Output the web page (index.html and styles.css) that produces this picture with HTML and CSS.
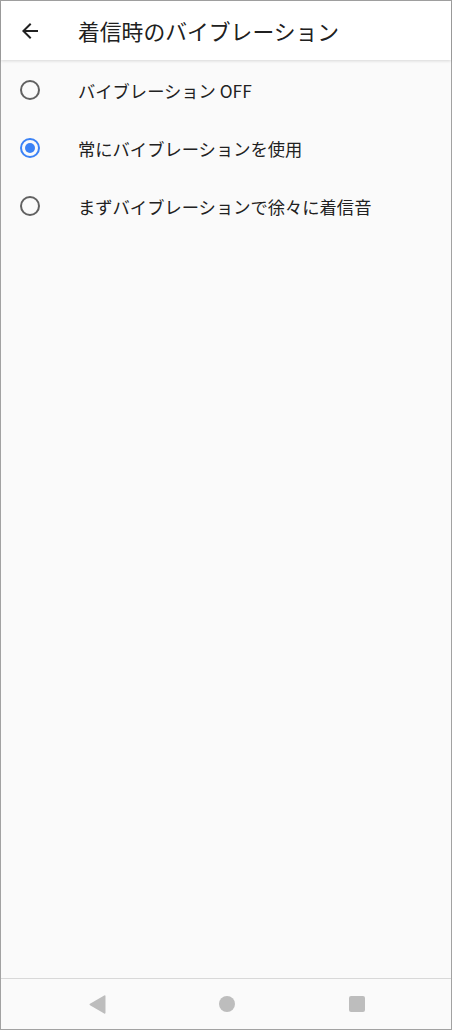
FILE: index.html
```html
<!DOCTYPE html>
<html lang="ja">
<head>
  <meta charset="UTF-8" />
  <title>着信時のバイブレーション</title>
  <meta name="viewport" content="width=device-width, initial-scale=1" />
  <link rel="stylesheet" href="styles.css">
</head>
<body>
  <div class="screen">
    <header class="appbar">
      <div class="icon-slot">
        <svg class="back" width="24" height="24" viewBox="0 0 24 24">
          <path d="M20 11H7.83l5.59-5.59L12 4l-8 8 8 8 1.41-1.41L7.83 13H20v-2z" />
        </svg>
      </div>
      <h1 class="title">着信時のバイブレーション</h1>
    </header>

    <ul class="options">
      <li class="option">
        <div class="icon-slot"><span class="radio"></span></div>
        <span class="label">バイブレーション OFF</span>
      </li>
      <li class="option">
        <div class="icon-slot"><span class="radio checked"></span></div>
        <span class="label">常にバイブレーションを使用</span>
      </li>
      <li class="option">
        <div class="icon-slot"><span class="radio"></span></div>
        <span class="label">まずバイブレーションで徐々に着信音</span>
      </li>
    </ul>

    <nav class="navbar">
      <div class="nav-slot">
        <svg width="17" height="19" viewBox="0 0 17 19">
          <path d="M15.2 0.6 Q16.5 -0.2 16.5 1.4 V17.6 Q16.5 19.2 15.2 18.4 L1 10.2 Q0 9.5 1 8.8 Z" />
        </svg>
      </div>
      <div class="nav-slot"><span class="home"></span></div>
      <div class="nav-slot"><span class="recents"></span></div>
    </nav>
  </div>
</body>
</html>
```

FILE: styles.css
```css
html, body {
  margin: 0;
  padding: 0;
}
body {
  font-family: "Noto Sans CJK JP", "Noto Sans", Roboto, sans-serif;
  color: #212121;
}
.screen {
  width: 452px;
  height: 1030px;
  box-sizing: border-box;
  border: 1px solid #a2a2a2;
  background: #fafafa;
  display: flex;
  flex-direction: column;
}
.appbar {
  height: 59px;
  display: flex;
  align-items: center;
  background: #fff;
  box-shadow: 0 1px 3px rgba(0, 0, 0, 0.14);
  position: relative;
  z-index: 1;
}
.icon-slot {
  width: 58px;
  flex: none;
  display: flex;
  justify-content: center;
  align-items: center;
}
.back {
  fill: #212121;
}
.title {
  margin: 0 0 0 19px;
  font-size: 21.8px;
  font-weight: 400;
  color: #202020;
}
.options {
  list-style: none;
  margin: 0;
  padding: 1px 0 0;
  flex: 1;
}
.option {
  height: 58px;
  display: flex;
  align-items: center;
}
.label {
  margin-left: 19px;
  font-size: 17.3px;
}
.radio {
  width: 20px;
  height: 20px;
  box-sizing: border-box;
  border: 2px solid #616161;
  border-radius: 50%;
  display: flex;
  justify-content: center;
  align-items: center;
}
.radio.checked {
  border-color: #3b82f6;
}
.radio.checked::after {
  content: "";
  width: 10px;
  height: 10px;
  border-radius: 50%;
  background: #3b82f6;
}
.navbar {
  height: 50px;
  border-top: 1px solid #d8d8d8;
  background: #fafafa;
  display: flex;
  align-items: center;
  padding-left: 31px;
}
.nav-slot {
  width: 130px;
  display: flex;
  justify-content: center;
  align-items: center;
}
.nav-slot svg {
  fill: #bdbdbd;
}
.home {
  width: 16px;
  height: 16px;
  border-radius: 50%;
  background: #bdbdbd;
}
.recents {
  width: 16px;
  height: 16px;
  border-radius: 2px;
  background: #bdbdbd;
}
```
